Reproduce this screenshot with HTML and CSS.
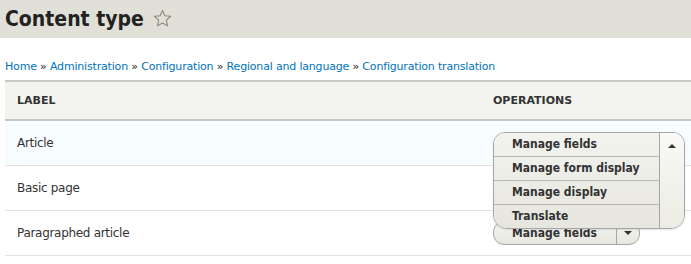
FILE: index.html
```html
<!DOCTYPE html>
<html lang="en">
<head>
    <meta charset="UTF-8">
    <title>Content type</title>
    <link rel="stylesheet" href="styles.css">
</head>
<body>
    <header class="page-header">
        <h1 class="page-title">Content type
            <svg class="star" width="19" height="19" viewBox="0 0 20 20"><path d="M10 1.5l2.5 5.6 6.1.6-4.6 4.1 1.3 6-5.3-3.1-5.3 3.1 1.3-6-4.6-4.1 6.1-.6z" fill="none" stroke="#8a8776" stroke-width="1.1" stroke-linejoin="round"/></svg>
        </h1>
    </header>
    <main class="content">
        <nav class="breadcrumb">
            <a href="#">Home</a> » <a href="#">Administration</a> » <a href="#">Configuration</a> » <a href="#">Regional and language</a> » <a href="#">Configuration translation</a>
        </nav>
        <table class="types">
            <thead>
                <tr><th class="col-label">Label</th><th>Operations</th></tr>
            </thead>
            <tbody>
                <tr class="selected">
                    <td>Article</td>
                    <td class="ops">
                        <div class="dropbutton open">
                            <ul class="dropbutton-list">
                                <li><a href="#">Manage fields</a></li>
                                <li><a href="#">Manage form display</a></li>
                                <li><a href="#">Manage display</a></li>
                                <li><a href="#">Translate</a></li>
                            </ul>
                            <span class="dropbutton-toggle"><span class="arrow up"></span></span>
                        </div>
                    </td>
                </tr>
                <tr>
                    <td>Basic page</td>
                    <td class="ops"></td>
                </tr>
                <tr>
                    <td>Paragraphed article</td>
                    <td class="ops">
                        <div class="dropbutton">
                            <ul class="dropbutton-list">
                                <li><a href="#">Manage fields</a></li>
                            </ul>
                            <span class="dropbutton-toggle"><span class="arrow down"></span></span>
                        </div>
                    </td>
                </tr>
            </tbody>
        </table>
    </main>
</body>
</html>
```
FILE: styles.css
```css
body {
    margin: 0;
    font-family: "DejaVu Sans", "Liberation Sans", sans-serif;
    color: #222;
    background-color: #fff;
}

.page-header {
    background-color: #e0e0d8;
    height: 38px;
    padding-left: 5px;
}

.page-title {
    margin: 0;
    font-family: "DejaVu Sans Condensed", "DejaVu Sans", sans-serif;
    font-size: 21px;
    line-height: 38px;
    font-weight: bold;
    color: #222;
    display: flex;
    align-items: center;
    gap: 9px;
}

.star {
    margin-top: -2px;
}

.content {
    padding-left: 5px;
}

.breadcrumb {
    font-size: 11px;
    letter-spacing: -0.18px;
    line-height: 14px;
    padding: 22px 0 6px;
    color: #222;
}

.breadcrumb a {
    color: #0074bd;
    text-decoration: none;
}

.types {
    width: 100%;
    border-collapse: collapse;
    font-size: 12px;
}

.types th {
    text-align: left;
    text-transform: uppercase;
    font-size: 11px;
    font-weight: bold;
    color: #333;
    background-color: #f3f3ef;
    border-top: 2px solid #c8c8c2;
    border-bottom: 2px solid #c8c8c2;
    height: 37px;
    padding: 0 12px;
}

.types th.col-label {
    width: 452px;
}

.types td {
    height: 44px;
    padding: 0 12px;
    border-bottom: 1px solid #e2e1dc;
    vertical-align: middle;
    color: #333;
    letter-spacing: -0.3px;
}

.types tr.selected td {
    background-color: #f7fcff;
}

.ops {
    position: relative;
}

.dropbutton {
    display: inline-flex;
    border: 1px solid #a6a6a6;
    border-radius: 11px;
    background: linear-gradient(#f6f6f2, #e7e7df);
    vertical-align: middle;
    overflow: hidden;
    letter-spacing: 0;
}

.dropbutton.open {
    position: absolute;
    top: 11px;
    left: 12px;
    z-index: 10;
    width: 192px;
    box-sizing: border-box;
    border-radius: 12px 12px 14px 14px;
    box-shadow: 0 1px 2px rgba(0, 0, 0, 0.1);
}

.dropbutton-list {
    list-style: none;
    margin: 0;
    padding: 0;
    flex: 1;
}

.dropbutton-list li {
    border-bottom: 1px solid #b8b8b2;
}

.dropbutton-list li:last-child {
    border-bottom: none;
}

.dropbutton-list a {
    display: block;
    padding: 0 19px 0 18px;
    height: 22px;
    line-height: 22px;
    font-family: "DejaVu Sans Condensed", "DejaVu Sans", sans-serif;
    font-size: 12px;
    font-weight: bold;
    color: #333;
    text-decoration: none;
    white-space: nowrap;
}

.dropbutton.open .dropbutton-list a {
    height: 23px;
    line-height: 23px;
}

.dropbutton.open .dropbutton-list {
    background: linear-gradient(#f3f3ee, #e6e6de);
}

.dropbutton-toggle {
    width: 23px;
    border-left: 1px solid #a6a6a6;
    display: flex;
    justify-content: center;
    padding-top: 9px;
    box-sizing: border-box;
}

.dropbutton.open .dropbutton-toggle {
    width: 25px;
    padding-top: 11px;
    background: linear-gradient(#f9f9f6, #ecece4);
}

.arrow {
    width: 0;
    height: 0;
    border-left: 4px solid transparent;
    border-right: 4px solid transparent;
}

.arrow.up {
    border-bottom: 4px solid #333;
}

.arrow.down {
    border-top: 4px solid #333;
}
```
